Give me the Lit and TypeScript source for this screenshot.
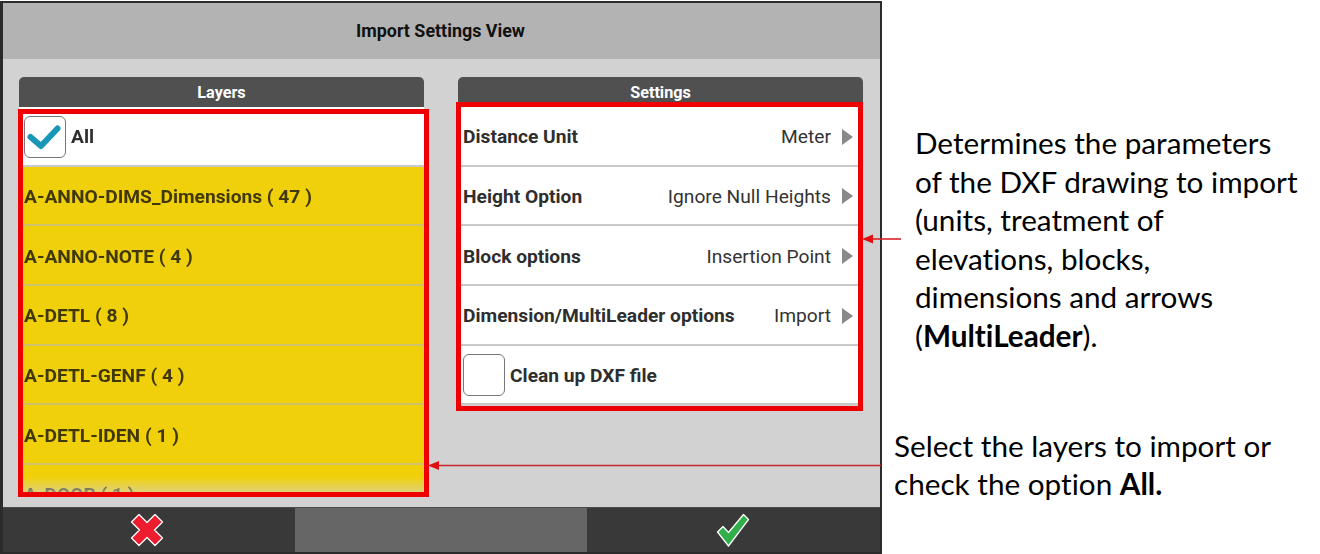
import { LitElement, html, css } from "lit";
import { customElement } from "lit/decorators.js";

const layers = [
  "A-ANNO-DIMS_Dimensions ( 47 )",
  "A-ANNO-NOTE ( 4 )",
  "A-DETL ( 8 )",
  "A-DETL-GENF ( 4 )",
  "A-DETL-IDEN ( 1 )",
  "A-DOOR ( 1 )",
];
const settings = [
  ["Distance Unit", "Meter"],
  ["Height Option", "Ignore Null Heights"],
  ["Block options", "Insertion Point"],
  ["Dimension/MultiLeader options", "Import"],
];

@customElement("app-root")
export class AppRoot extends LitElement {
  static styles = css`
    :host { display: flex; position: relative; width: 1320px; height: 554px; background: #fff; overflow: hidden; font-family: Roboto, "Liberation Sans", sans-serif; }
    * { box-sizing: border-box; }
    .device { width: 882px; height: 553px; margin: 1px 0 0 0; border: 2px solid #2b2b2b; border-left-width: 3px; background: #d2d2d2; display: flex; flex-direction: column; flex: none; }
    .title { height: 56px; background: #b3b3b3; flex: none; display: flex; align-items: center; justify-content: center; font-weight: 700; font-size: 17.9px; color: #111; padding: 0 2px 1px 0; }
    .content { flex: 1; display: flex; gap: 34px; padding: 18px 0 0 16px; min-height: 0; }
    .col { width: 405px; flex: none; display: flex; flex-direction: column; }
    .head { height: 30px; flex: none; background: #505050; color: #fff; border-radius: 5px 5px 0 0; font-weight: 700; font-size: 16.2px; display: flex; align-items: flex-end; justify-content: center; padding-bottom: 5px; }
    .list { height: 388px; overflow: hidden; -webkit-mask-image: linear-gradient(#000 370px, rgba(0,0,0,.35) 388px); mask-image: linear-gradient(#000 370px, rgba(0,0,0,.35) 388px); }
    .row { height: 59.67px; border-bottom: 2px solid #c9c9c9; display: flex; align-items: center; padding: 2px 10px 0 5px; font-weight: 700; font-size: 19.2px; color: #2e2e2e; background: #fff; white-space: nowrap; }
    .row.y { background: #f0d00a; color: #413808; border-bottom-color: #cfc26a; }
    .box { width: 42px; height: 42px; border: 1px solid #777; border-radius: 6px; background: #fff; margin-right: 5px; flex: none; }
    .box svg { display: block; }
    .val { margin-left: auto; font-weight: 400; color: #333; }
    .chev { width: 0; height: 0; border-left: 11px solid #888; border-top: 8.5px solid transparent; border-bottom: 8.5px solid transparent; margin-left: 11px; flex: none; }
    .footer { height: 45px; flex: none; display: flex; background: #666; border-top: 1px solid #4a4a4a; }
    .btn { width: 292px; background: #393939; display: flex; align-items: center; justify-content: center; flex: none; padding-right: 4px; }
    .btn.end { flex: 1; padding-right: 2px; }
    .mid { width: 292px; flex: none; background: #666; }
    .notes { flex: 1; position: relative; font-family: Lato, "Open Sans", sans-serif; font-variant-ligatures: none; color: #000; font-size: 29.7px; line-height: 38.6px; display: flex; flex-direction: column; white-space: nowrap; }
    .n1 { margin: 124px 0 0 33px; }
    .n2 { margin: 71px 0 0 12px; }
    .mark { position: absolute; border: 5px solid #ee0000; pointer-events: none; }
    .m1 { left: 18px; top: 109px; width: 411px; height: 388px; }
    .m2 { left: 456px; top: 102px; width: 407px; height: 309px; }
    svg.arrows { position: absolute; left: 0; top: 0; pointer-events: none; }
  `;

  render() {
    return html`
      <div class="device">
        <div class="title">Import Settings View</div>
        <div class="content">
          <div class="col">
            <div class="head">Layers</div>
            <div class="list">
              <div class="row">
                <span class="box">
                  <svg width="40" height="40" viewBox="0 0 40 40"><path d="M5.5 20 L16 29 L32.5 11.5" fill="none" stroke="#1a96b6" stroke-width="6" stroke-linecap="round" stroke-linejoin="round"/></svg>
                </span>All
              </div>
              ${layers.map((l) => html`<div class="row y">${l}</div>`)}
            </div>
          </div>
          <div class="col">
            <div class="head">Settings</div>
            <div>
              ${settings.map(([k, v]) => html`<div class="row"><span>${k}</span><span class="val">${v}</span><span class="chev"></span></div>`)}
              <div class="row"><span class="box"></span>Clean up DXF file</div>
            </div>
          </div>
        </div>
        <div class="footer">
          <div class="btn">
            <svg width="36" height="36" viewBox="0 0 36 36"><path d="M10 2.5 L18 10.5 L26 2.5 L33.5 10 L25.5 18 L33.5 26 L26 33.5 L18 25.5 L10 33.5 L2.5 26 L10.5 18 L2.5 10 Z" fill="#ed1c2e" stroke="#fff" stroke-width="1.3" stroke-linejoin="round"/></svg>
          </div>
          <div class="mid"></div>
          <div class="btn end">
            <svg width="36" height="36" viewBox="0 0 36 36"><path d="M28.5 2.5 L33.5 7.5 L13.5 34 L2.5 20 L8 14.5 L13.5 20.5 Z" fill="#2fae4a" stroke="#fff" stroke-width="1.3" stroke-linejoin="round"/></svg>
          </div>
        </div>
      </div>
      <div class="notes">
        <div class="n1">Determines the parameters<br>of the DXF drawing to import<br>(units, treatment of<br>elevations, blocks,<br>dimensions and arrows<br>(<b>MultiLeader</b>).</div>
        <div class="n2">Select the layers to import or<br>check the option <b>All.</b></div>
      </div>
      <div class="mark m1"></div>
      <div class="mark m2"></div>
      <svg class="arrows" width="1320" height="554" viewBox="0 0 1320 554">
        <path d="M901 239 H870" stroke="#d8232a" stroke-width="1.6" fill="none"/>
        <path d="M862 239 L873 234.5 V243.5 Z" fill="#e01010"/>
        <path d="M881 465.5 H436" stroke="#c8242c" stroke-width="1.6" fill="none"/>
        <path d="M428 465.5 L439 461 V470 Z" fill="#e01010"/>
      </svg>
    `;
  }
}
